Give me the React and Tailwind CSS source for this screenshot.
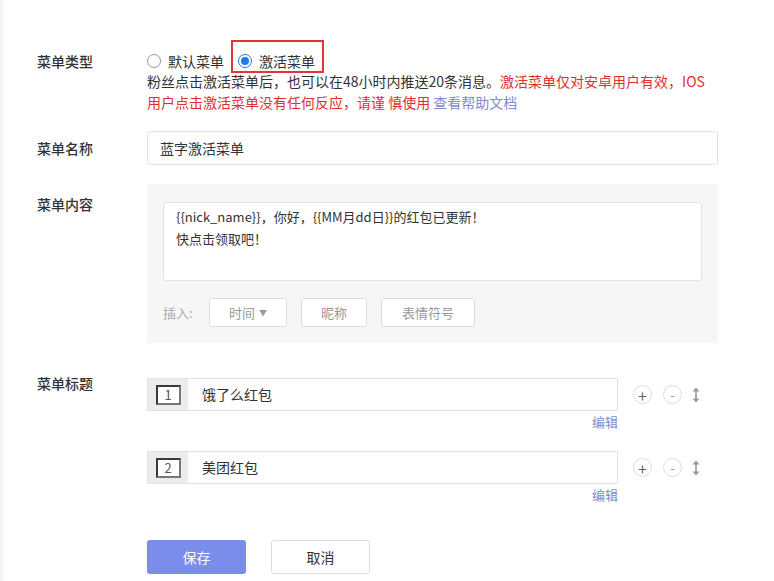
import React from "react";

const font = { fontFamily: '"Noto Sans CJK SC", "Noto Sans", sans-serif' };

const Label = ({ children, className = "" }) => (
  <div className={`w-[144px] shrink-0 pl-[34px] text-[14px] font-medium text-[#333] ${className}`}>
    {children}
  </div>
);

const UpDown = () => (
  <svg width="10" height="18" viewBox="0 0 10 18" className="text-[#999]">
    <path d="M5 3 L5 15" stroke="currentColor" strokeWidth="1.6" />
    <path d="M1.5 5.5 L5 1.5 L8.5 5.5 Z" fill="currentColor" />
    <path d="M1.5 12.5 L5 16.5 L8.5 12.5 Z" fill="currentColor" />
  </svg>
);

const TitleRow = ({ num, text }) => (
  <div className="flex flex-col">
    <div className="flex items-center">
      <div className="flex h-[33px] w-[471px] border border-[#e3e3e3]">
        <div className="flex w-[40px] shrink-0 items-center justify-center bg-[#ececec]">
          <div className="flex h-[20px] w-[25px] items-center justify-center border-2 border-[#3a3a3a] border-b-[#777] border-r-[#777] bg-white text-[13px] leading-none text-[#555]">
            {num}
          </div>
        </div>
        <div className="flex flex-1 items-center pl-[14px] text-[14px] text-[#333]">{text}</div>
      </div>
      <div className="ml-[15px] flex h-[19px] w-[19px] items-center justify-center rounded-full border border-[#ddd] text-[16px] leading-none text-[#666]">
        +
      </div>
      <div className="ml-[11px] flex h-[19px] w-[19px] items-center justify-center rounded-full border border-[#ddd] text-[13px] leading-none text-[#999]">
        -
      </div>
      <div className="ml-[9px] flex items-center">
        <UpDown />
      </div>
    </div>
    <div className="flex w-[471px] justify-end pt-[1px] text-[13px] leading-[20px] text-[#7f8ad0]">编辑</div>
  </div>
);

export default function App() {
  return (
    <div style={font} className="min-h-[581px] w-[774px] border-l-[3px] border-[#f4f4f4] bg-white">
      <div className="pt-[51px]">
        {/* 菜单类型 */}
        <div className="flex">
          <Label className="leading-[20px]">菜单类型</Label>
          <div className="flex flex-col">
            <div className="flex h-[20px] items-center text-[14px] text-[#333]">
              <span className="h-[14px] w-[14px] rounded-full border border-[#999] bg-white" />
              <span className="ml-[7px]">默认菜单</span>
              <div className="relative ml-[14px] flex items-center">
                <span className="flex h-[14px] w-[14px] items-center justify-center rounded-full border border-[#1e7ae8] bg-white">
                  <span className="h-[8px] w-[8px] rounded-full bg-[#1e7ae8]" />
                </span>
                <span className="ml-[7px]">激活菜单</span>
                <div className="absolute left-[-7px] top-[-11px] h-[33px] w-[93px] border-2 border-[#e0353b]" />
              </div>
            </div>
            <div className="text-[14px] leading-[21px] text-[#333]">
              <div>
                粉丝点击激活菜单后，也可以在48小时内推送20条消息。
                <span className="text-[#e02f2f]">激活菜单仅对安卓用户有效，IOS</span>
              </div>
              <div>
                <span className="text-[#e02f2f]">用户点击激活菜单没有任何反应，请谨 慎使用</span>{" "}
                <span className="text-[#7f8ad0]">查看帮助文档</span>
              </div>
            </div>
          </div>
        </div>

        {/* 菜单名称 */}
        <div className="mt-[18px] flex items-center">
          <Label>菜单名称</Label>
          <div className="flex h-[34px] w-[571px] items-center rounded-[3px] border border-[#e3e3e3] pl-[12px] text-[14px] text-[#333]">
            蓝字激活菜单
          </div>
        </div>

        {/* 菜单内容 */}
        <div className="mt-[19px] flex">
          <Label className="pt-[10px] leading-[20px]">菜单内容</Label>
          <div className="w-[571px] bg-[#f5f6f8] px-[16px] pb-[16px] pt-[18px]">
            <div className="h-[79px] rounded-[3px] border border-[#e3e3e3] bg-white pl-[12px] pt-[3px] text-[13px] leading-[22px] text-[#333]">
              <div>{"{{nick_name}}，你好，{{MM月dd日}}的红包已更新！"}</div>
              <div>快点击领取吧！</div>
            </div>
            <div className="mt-[17px] flex items-center text-[13px] text-[#aaa]">
              <span className="w-[46px]">插入:</span>
              <div className="flex h-[29px] w-[78px] items-center justify-center gap-[4px] rounded-[3px] border border-[#ddd] bg-white text-[#999]">
                时间
                <span className="text-[8px]">▼</span>
              </div>
              <div className="ml-[14px] flex h-[29px] w-[66px] items-center justify-center rounded-[3px] border border-[#ddd] bg-white text-[#999]">
                昵称
              </div>
              <div className="ml-[14px] flex h-[29px] w-[94px] items-center justify-center rounded-[3px] border border-[#ddd] bg-white text-[#999]">
                表情符号
              </div>
            </div>
          </div>
        </div>

        {/* 菜单标题 */}
        <div className="mt-[35px] flex">
          <Label className="leading-[10px]">菜单标题</Label>
          <div className="flex flex-col gap-[19px]">
            <TitleRow num="1" text="饿了么红包" />
            <TitleRow num="2" text="美团红包" />
          </div>
        </div>

        {/* buttons */}
        <div className="mt-[35px] flex pl-[144px]">
          <div className="flex h-[34px] w-[99px] items-center justify-center rounded-[3px] bg-[#7b8deb] text-[14px] text-white">
            保存
          </div>
          <div className="ml-[25px] flex h-[34px] w-[99px] items-center justify-center rounded-[3px] border border-[#ddd] bg-white text-[14px] text-[#333]">
            取消
          </div>
        </div>
      </div>
    </div>
  );
}
